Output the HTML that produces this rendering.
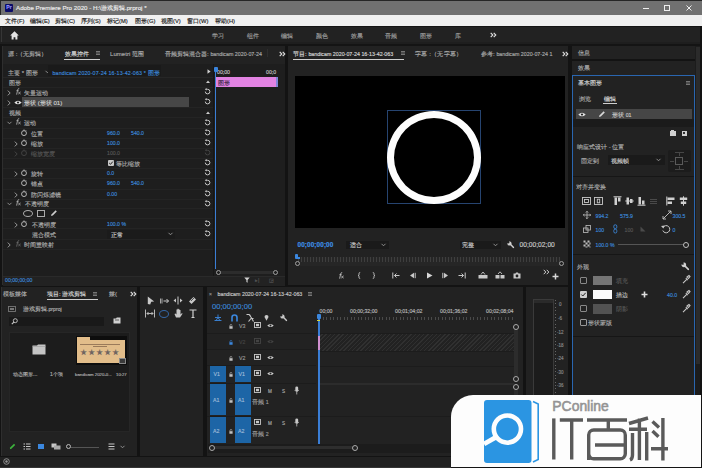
<!DOCTYPE html>
<html><head><meta charset="utf-8">
<style>
*{margin:0;padding:0;box-sizing:border-box}
html,body{width:702px;height:468px;overflow:hidden;background:#131313;font-family:"Liberation Sans",sans-serif;color:#aaaaaa}
.a{position:absolute}
svg.a{overflow:visible}
.t{position:absolute;white-space:nowrap;font-size:6.1px;line-height:7px;-webkit-text-stroke:0.15px currentColor}
.n{font-size:5.2px}
.p{position:absolute;background:#232323}
.blue{color:#3b87d8}
.dim{color:#555}
.w{color:#d6d6d6}
.hl{position:absolute;height:1px;background:#1a1a1a}
</style></head><body>
<svg width="0" height="0" style="position:absolute">
<defs>
<symbol id="sw" viewBox="0 0 6 7"><circle cx="3" cy="4.1" r="2.45" fill="none" stroke="currentColor" stroke-width="0.95"/><path d="M3 0.5V1.7" stroke="currentColor" stroke-width="1"/><path d="M4.8 1.3L5.5 2" stroke="currentColor" stroke-width="0.7"/></symbol>
<symbol id="rs" viewBox="0 0 7 7"><path d="M1.3 3.6A2.3 2.3 0 1 0 3.5 1.3H2.2" fill="none" stroke="currentColor" stroke-width="1"/><path d="M2.6 0L0.8 1.3L2.6 2.6Z" fill="currentColor"/></symbol>
<symbol id="eye" viewBox="0 0 8 5"><path d="M0.3 2.5Q4 -1.2 7.7 2.5Q4 6.2 0.3 2.5Z" fill="currentColor"/><circle cx="4" cy="2.5" r="1.1" fill="#222"/></symbol>
<symbol id="lock" viewBox="0 0 5 6"><path d="M1.2 2.6V1.8A1.3 1.3 0 0 1 3.8 1.8" fill="none" stroke="currentColor" stroke-width="0.8"/><rect x="0.5" y="2.6" width="4" height="3.2" fill="currentColor"/></symbol>
<symbol id="film" viewBox="0 0 7 6"><rect x="0.5" y="0.5" width="6" height="5" fill="none" stroke="currentColor" stroke-width="0.9"/><rect x="2" y="1.8" width="3" height="2.4" fill="currentColor"/></symbol>
<symbol id="drop" viewBox="0 0 7 7"><path d="M0.8 6.2L4 3M4.5 1.2L5.8 2.5M3.2 2L5 3.8L6.5 1.5L5.5 0.5Z" fill="currentColor" stroke="currentColor" stroke-width="0.9"/></symbol>
<symbol id="mic" viewBox="0 0 5 8"><rect x="1.2" y="0.3" width="2.6" height="4.6" rx="1.3" fill="currentColor"/><path d="M0.6 3.5Q2.5 6.6 4.4 3.5M2.5 5.4V7.6" fill="none" stroke="currentColor" stroke-width="0.7"/></symbol>
<symbol id="chr" viewBox="0 0 4 6"><path d="M0.8 0.6L3.2 3L0.8 5.4" fill="none" stroke="currentColor" stroke-width="0.9"/></symbol>
<symbol id="chd" viewBox="0 0 6 4"><path d="M0.6 0.8L3 3.2L5.4 0.8" fill="none" stroke="currentColor" stroke-width="0.9"/></symbol>
<symbol id="fx" viewBox="0 0 6 7"><path d="M4.2 0.6Q3 0.4 2.7 1.8L1.6 6.6M1.5 2.6H3.6" fill="none" stroke="currentColor" stroke-width="0.9"/><path d="M3.3 3.6L5.6 6.4M5.6 3.6L3.3 6.4" fill="none" stroke="currentColor" stroke-width="0.8"/></symbol>
<symbol id="wr" viewBox="0 0 10 10"><path d="M8.7 8.7L4.8 4.8" stroke="currentColor" stroke-width="1.9" stroke-linecap="round"/><path d="M0.8 2.6A2.7 2.7 0 1 0 2.6 0.8L3.4 2.4L2.4 3.4Z" fill="currentColor"/></symbol>
</defs></svg>

<!-- title bar -->
<div class="a" style="left:0;top:0;width:702px;height:15px;background:#717171;border-top:1px solid #262626;border-left:1px solid #262626"></div>
<div class="a" style="left:5px;top:4px;width:8px;height:7.5px;background:#0b0b66;border-radius:1px"></div>
<div class="t" style="left:6.3px;top:5px;font-size:5px;line-height:5px;color:#9a9aff;font-weight:bold">Pr</div>
<div class="t" style="left:16px;top:4px;font-size:6.2px;line-height:8px;color:#ededed">Adobe Premiere Pro 2020 - H:\游戏剪辑.prproj *</div>
<div class="a" style="left:643px;top:8px;width:6px;height:1px;background:#eee"></div>
<div class="a" style="left:664px;top:5px;width:6px;height:6px;border:1px solid #eee"></div>
<svg class="a" style="left:686px;top:5px" width="6" height="6"><path d="M0.5 0.5L5.5 5.5M5.5 0.5L0.5 5.5" stroke="#eee" stroke-width="1"/></svg>

<!-- menu bar -->
<div class="a" style="left:0;top:15px;width:702px;height:11px;background:#f0f0f0"></div>
<div class="t" style="left:5px;top:17.5px;color:#1a1a1a;font-size:5.8px">文件(F)</div>
<div class="t" style="left:30px;top:17.5px;color:#1a1a1a;font-size:5.8px">编辑(E)</div>
<div class="t" style="left:55px;top:17.5px;color:#1a1a1a;font-size:5.8px">剪辑(C)</div>
<div class="t" style="left:81px;top:17.5px;color:#1a1a1a;font-size:5.8px">序列(S)</div>
<div class="t" style="left:107px;top:17.5px;color:#1a1a1a;font-size:5.8px">标记(M)</div>
<div class="t" style="left:135px;top:17.5px;color:#1a1a1a;font-size:5.8px">图形(G)</div>
<div class="t" style="left:161px;top:17.5px;color:#1a1a1a;font-size:5.8px">视图(V)</div>
<div class="t" style="left:187px;top:17.5px;color:#1a1a1a;font-size:5.8px">窗口(W)</div>
<div class="t" style="left:215px;top:17.5px;color:#1a1a1a;font-size:5.8px">帮助(H)</div>

<!-- workspace header -->
<div class="a" style="left:0;top:26px;width:702px;height:19px;background:#222"></div>
<div class="a" style="left:0;top:26px;width:702px;height:1px;background:#151515"></div>
<div class="a" style="left:1px;top:27px;width:1px;height:15px;background:#363636"></div>
<svg class="a" style="left:10px;top:31px" width="9" height="9" viewBox="0 0 9 9"><path d="M4.5 0.3L0.2 4.4H1.6V8.6H3.6V6.2H5.4V8.6H7.4V4.4H8.8Z" fill="#e4e4e4"/></svg>
<div class="t" style="left:212px;top:31.5px;color:#9c9c9c;font-size:6.4px">学习</div>
<div class="t" style="left:247px;top:31.5px;color:#9c9c9c;font-size:6.4px">组件</div>
<div class="t" style="left:281px;top:31.5px;color:#9c9c9c;font-size:6.4px">编辑</div>
<div class="t" style="left:316px;top:31.5px;color:#9c9c9c;font-size:6.4px">颜色</div>
<div class="t" style="left:351px;top:31.5px;color:#9c9c9c;font-size:6.4px">效果</div>
<div class="t" style="left:385px;top:31.5px;color:#9c9c9c;font-size:6.4px">音频</div>
<div class="t" style="left:420px;top:31.5px;color:#9c9c9c;font-size:6.4px">图形</div>
<div class="t" style="left:455px;top:31.5px;color:#9c9c9c;font-size:6.4px">库</div>
<svg class="a" style="left:490px;top:32px" width="7" height="6"><path d="M0.7 0.8L2.8 3L0.7 5.2M3.7 0.8L5.8 3L3.7 5.2" fill="none" stroke="#e0e0e0" stroke-width="1.1"/></svg>
<div class="a" style="left:0;top:41.7px;width:702px;height:2.6px;background:#1e1e1e"></div>
<div class="a" style="left:0;top:44.3px;width:702px;height:1.9px;background:#141414"></div>

<!-- ============ EFFECT CONTROLS PANEL ============ -->
<div class="p" style="left:2px;top:46px;width:283px;height:239px;background:#222"></div>
<div class="a" style="left:2px;top:46px;width:1px;height:239px;background:#2e2e2e"></div>
<div class="t" style="left:8px;top:49.5px">源 :（无剪辑）</div>
<div class="t w" style="left:65px;top:49.5px">效果控件</div>
<svg class="a" style="left:95.5px;top:51.0px" width="4" height="4"><path d="M0 0.5H4M0 2H4M0 3.5H4" stroke="#8a8a8a" stroke-width="0.8"/></svg>
<div class="a" style="left:64px;top:59px;width:36px;height:1.2px;background:#cfcfcf"></div>
<div class="t" style="left:110px;top:49.5px">Lumetri 范围</div>
<div class="t" style="left:165px;top:49.5px">音频剪辑混合器: <span style="font-size:5.3px">bandicam 2020-07-24</span></div>
<div class="a" style="left:266.5px;top:49px;width:1px;height:8px;background:#2e2e2e"></div>
<svg class="a" style="left:279px;top:50.5px" width="7" height="6"><path d="M0.7 0.8L2.8 3L0.7 5.2M3.7 0.8L5.8 3L3.7 5.2" fill="none" stroke="#e0e0e0" stroke-width="1.1"/></svg>

<div class="a" style="left:3px;top:64px;width:282px;height:212px;background:#1e1e1e"></div>
<!-- row separators -->
<div class="hl" style="left:3px;top:77px;width:210px;background:#262626"></div>
<div class="hl" style="left:3px;top:87px;width:210px;background:#242424"></div>
<div class="hl" style="left:3px;top:107px;width:210px;background:#242424"></div>
<div class="hl" style="left:3px;top:117px;width:210px;background:#242424"></div>
<div class="hl" style="left:3px;top:128px;width:210px;background:#242424"></div>
<div class="hl" style="left:3px;top:138px;width:210px;background:#242424"></div>
<div class="hl" style="left:3px;top:148px;width:210px;background:#242424"></div>
<div class="hl" style="left:3px;top:158px;width:210px;background:#242424"></div>
<div class="hl" style="left:3px;top:168px;width:210px;background:#242424"></div>
<div class="hl" style="left:3px;top:178px;width:210px;background:#242424"></div>
<div class="hl" style="left:3px;top:189px;width:210px;background:#242424"></div>
<div class="hl" style="left:3px;top:199px;width:210px;background:#242424"></div>
<div class="hl" style="left:3px;top:208px;width:210px;background:#242424"></div>
<div class="hl" style="left:3px;top:218px;width:210px;background:#242424"></div>
<div class="hl" style="left:3px;top:228px;width:210px;background:#242424"></div>
<div class="hl" style="left:3px;top:239px;width:210px;background:#242424"></div>
<div class="hl" style="left:3px;top:249px;width:210px;background:#242424"></div>

<div class="t" style="left:8px;top:68.5px">主要 * 图形</div>
<svg class="a" style="left:45px;top:70px" width="5" height="4"><path d="M0.5 0.8L2.5 2.8L4.5 0.8" fill="none" stroke="#999" stroke-width="0.9"/></svg>
<div class="a" style="left:48px;top:65px;width:113px;height:11px;background:#1a1a1a"></div>
<div class="t blue" style="left:52.5px;top:68.5px"><span style="font-size:5.3px;letter-spacing:0.15px">bandicam 2020-07-24 16-13-42-063 *</span> 图形</div>
<svg class="a" style="left:207px;top:69px" width="4" height="5"><path d="M0.5 0.3L3.6 2.5L0.5 4.7Z" fill="#cfcfcf"/></svg>

<div class="t" style="left:9px;top:78.5px">图形</div>
<svg class="a" style="left:6.5px;top:90.0px;color:#a8a8a8" width="4" height="6"><use href="#chr"/></svg>
<svg class="a" style="left:15.0px;top:88.0px;color:#aaa" width="6" height="7"><use href="#fx"/></svg>
<div class="t" style="left:24px;top:88.5px">矢量运动</div>
<div class="a" style="left:22px;top:97px;width:167px;height:10px;background:#474747"></div>
<svg class="a" style="left:6.5px;top:100.0px;color:#a8a8a8" width="4" height="6"><use href="#chr"/></svg>
<svg class="a" style="left:14px;top:100px;color:#e0e0e0" width="8" height="5"><use href="#eye"/></svg>
<div class="t" style="left:24px;top:98.5px;color:#d0d0d0">形状 (形状 01)</div>
<div class="t" style="left:9px;top:108.5px">视频</div>
<svg class="a" style="left:7px;top:121px" width="5" height="4"><path d="M0.5 0.8L2.5 2.8L4.5 0.8" fill="none" stroke="#999" stroke-width="0.9"/></svg>
<svg class="a" style="left:15.0px;top:118.0px;color:#aaa" width="6" height="7"><use href="#fx"/></svg>
<div class="t" style="left:24px;top:118.5px">运动</div>

<svg class="a" style="left:21px;top:129px;color:#bbb" width="6" height="7"><use href="#sw"/></svg><div class="t" style="left:31px;top:129.5px">位置</div>
<div class="t blue n" style="left:107px;top:130px">960.0</div><div class="t blue n" style="left:131px;top:130px">540.0</div>
<svg class="a" style="left:13.5px;top:140.5px;color:#a8a8a8" width="4" height="6"><use href="#chr"/></svg><svg class="a" style="left:21px;top:139px;color:#bbb" width="6" height="7"><use href="#sw"/></svg><div class="t" style="left:31px;top:139.5px">缩放</div>
<div class="t blue n" style="left:107px;top:140px">100.0</div>
<svg class="a" style="left:13.5px;top:150.5px;color:#4a4a4a" width="4" height="6"><use href="#chr"/></svg><svg class="a" style="left:21px;top:149px;color:#444" width="6" height="7"><use href="#sw"/></svg><div class="t dim" style="left:31px;top:149.5px">缩放宽度</div>
<div class="t dim n" style="left:107px;top:150px">100.0</div>
<div class="a" style="left:108px;top:160px;width:6px;height:6px;background:#c8c8c8;border-radius:1px"></div>
<svg class="a" style="left:108px;top:160px" width="6" height="6"><path d="M1.2 3L2.5 4.3L4.8 1.6" fill="none" stroke="#222" stroke-width="1"/></svg>
<div class="t" style="left:116px;top:159.5px">等比缩放</div>
<svg class="a" style="left:13.5px;top:170.5px;color:#a8a8a8" width="4" height="6"><use href="#chr"/></svg><svg class="a" style="left:21px;top:169px;color:#bbb" width="6" height="7"><use href="#sw"/></svg><div class="t" style="left:31px;top:169.5px">旋转</div>
<div class="t blue n" style="left:107px;top:170px">0.0</div>
<svg class="a" style="left:21px;top:179px;color:#bbb" width="6" height="7"><use href="#sw"/></svg><div class="t" style="left:31px;top:179.5px">锚点</div>
<div class="t blue n" style="left:107px;top:180px">960.0</div><div class="t blue n" style="left:131px;top:180px">540.0</div>
<svg class="a" style="left:13.5px;top:191.5px;color:#a8a8a8" width="4" height="6"><use href="#chr"/></svg><svg class="a" style="left:21px;top:190px;color:#bbb" width="6" height="7"><use href="#sw"/></svg><div class="t" style="left:31px;top:190.5px">防闪烁滤镜</div>
<div class="t blue n" style="left:107px;top:191px">0.00</div>
<svg class="a" style="left:7px;top:202px" width="5" height="4"><path d="M0.5 0.8L2.5 2.8L4.5 0.8" fill="none" stroke="#999" stroke-width="0.9"/></svg>
<svg class="a" style="left:15.0px;top:199.0px;color:#aaa" width="6" height="7"><use href="#fx"/></svg>
<div class="t" style="left:25px;top:199.5px">不透明度</div>
<div class="a" style="left:23px;top:210px;width:10px;height:7px;border:1px solid #aaa;border-radius:50%"></div>
<div class="a" style="left:37px;top:210px;width:8px;height:7px;border:1px solid #aaa"></div>
<svg class="a" style="left:50px;top:209px" width="8" height="8"><path d="M1 7L1.6 5.2L5.6 1.2L6.8 2.4L2.8 6.4Z" fill="#ccc"/></svg>
<svg class="a" style="left:13.5px;top:221.5px;color:#a8a8a8" width="4" height="6"><use href="#chr"/></svg><svg class="a" style="left:21px;top:220px;color:#bbb" width="6" height="7"><use href="#sw"/></svg><div class="t" style="left:32px;top:220.5px">不透明度</div>
<div class="t blue n" style="left:107px;top:221px">100.0 %</div>
<div class="t" style="left:32px;top:230.5px">混合模式</div>
<div class="a" style="left:107px;top:229.5px;width:68px;height:9px;background:#1b1b1b"></div>
<div class="t" style="left:111px;top:230.5px;color:#c8c8c8">正常</div>
<svg class="a" style="left:168px;top:232px" width="5" height="4"><path d="M0.5 0.8L2.5 2.8L4.5 0.8" fill="none" stroke="#999" stroke-width="0.9"/></svg>
<svg class="a" style="left:6.5px;top:241.5px;color:#a8a8a8" width="4" height="6"><use href="#chr"/></svg>
<svg class="a" style="left:15.0px;top:240.0px;color:#666" width="6" height="7"><use href="#fx"/></svg>
<div class="t" style="left:24px;top:240.5px">时间重映射</div>

<!-- reset icons column -->
<svg class="a" style="left:206px;top:80px" width="4" height="3"><path d="M0 3L2 0.5L4 3Z" fill="#ccc"/></svg>
<svg class="a" style="left:204px;top:88px;color:#c8c8c8" width="7" height="7"><use href="#rs"/></svg>
<svg class="a" style="left:204px;top:98px;color:#c8c8c8" width="7" height="7"><use href="#rs"/></svg>
<svg class="a" style="left:206px;top:111px" width="4" height="3"><path d="M0 3L2 0.5L4 3Z" fill="#ccc"/></svg>
<svg class="a" style="left:204px;top:119px;color:#c8c8c8" width="7" height="7"><use href="#rs"/></svg>
<svg class="a" style="left:204px;top:129px;color:#c8c8c8" width="7" height="7"><use href="#rs"/></svg>
<svg class="a" style="left:204px;top:139px;color:#c8c8c8" width="7" height="7"><use href="#rs"/></svg>
<svg class="a" style="left:204px;top:149px;color:#444" width="7" height="7"><use href="#rs"/></svg>
<svg class="a" style="left:204px;top:159px;color:#c8c8c8" width="7" height="7"><use href="#rs"/></svg>
<svg class="a" style="left:204px;top:169px;color:#c8c8c8" width="7" height="7"><use href="#rs"/></svg>
<svg class="a" style="left:204px;top:179px;color:#c8c8c8" width="7" height="7"><use href="#rs"/></svg>
<svg class="a" style="left:204px;top:190px;color:#c8c8c8" width="7" height="7"><use href="#rs"/></svg>
<svg class="a" style="left:204px;top:200px;color:#c8c8c8" width="7" height="7"><use href="#rs"/></svg>
<svg class="a" style="left:204px;top:220px;color:#c8c8c8" width="7" height="7"><use href="#rs"/></svg>
<svg class="a" style="left:204px;top:230px;color:#c8c8c8" width="7" height="7"><use href="#rs"/></svg>

<!-- effect timeline -->
<div class="a" style="left:213px;top:64px;width:1px;height:212px;background:#171717"></div>
<div class="t n" style="left:217px;top:68.5px;color:#c4c4c4">00;00</div>
<div class="t n" style="left:266px;top:68.5px;color:#c4c4c4">00;0</div>
<div class="a" style="left:215px;top:77px;width:63px;height:10px;background:#e283e2"></div>
<div class="a" style="left:276px;top:77px;width:2px;height:10px;background:#7f86d8"></div>
<div class="t" style="left:218px;top:78.5px;color:#402a48">图形</div>
<div class="a" style="left:215px;top:68px;width:1.3px;height:201px;background:#3a7ed6"></div>
<div class="a" style="left:213.5px;top:67px;width:4px;height:5px;background:#3a84dd;border-radius:1px"></div>
<div class="a" style="left:218px;top:271px;width:57px;height:3px;background:#2c2c2c"></div>
<div class="a" style="left:215.5px;top:269.5px;width:5px;height:5px;border:1px solid #a0a0a0;border-radius:50%;background:#1e1e1e"></div>
<div class="a" style="left:272.5px;top:269.5px;width:5px;height:5px;border:1px solid #a0a0a0;border-radius:50%;background:#1e1e1e"></div>

<div class="a" style="left:3px;top:275.5px;width:282px;height:10px;background:#222;border-top:1px solid #2a2a2a"></div>
<div class="t blue n" style="left:5px;top:277px">00;00;00;00</div>
<svg class="a" style="left:244px;top:277px" width="6" height="6"><path d="M0.3 0.5H5.7L3.6 3V5.8L2.4 5V3Z" fill="#d0d0d0"/></svg>
<div class="t dim" style="left:255px;top:276.5px;font-size:5px">▸|</div>
<div class="t dim" style="left:269px;top:276.5px;font-size:5px">◲</div>

<!-- ============ PROGRAM MONITOR ============ -->
<div class="p" style="left:288px;top:46px;width:280px;height:239px;background:#222"></div>
<div class="t w" style="left:293px;top:49.5px">节目: <span style="font-size:5.3px">bandicam 2020-07-24 16-13-42-063</span></div>
<svg class="a" style="left:400.5px;top:51.0px" width="4" height="4"><path d="M0 0.5H4M0 2H4M0 3.5H4" stroke="#8a8a8a" stroke-width="0.8"/></svg>
<div class="a" style="left:293px;top:59px;width:111px;height:1.2px;background:#cfcfcf"></div>
<div class="t" style="left:415px;top:49.5px;letter-spacing:0.2px">字幕 :（无字幕）</div>
<div class="t" style="left:481px;top:49.5px">参考: <span style="font-size:5.3px">bandicam 2020-07-24 1</span></div>
<svg class="a" style="left:562px;top:50.5px" width="7" height="6"><path d="M0.7 0.8L2.8 3L0.7 5.2M3.7 0.8L5.8 3L3.7 5.2" fill="none" stroke="#e0e0e0" stroke-width="1.1"/></svg>
<div class="a" style="left:294.5px;top:76px;width:270px;height:152px;background:#000"></div>
<div class="a" style="left:386.5px;top:110px;width:94.5px;height:94px;border:1px solid #264470"></div>
<div class="a" style="left:387px;top:110.5px;width:94px;height:93px;border:7.3px solid #fdfdfd;border-radius:50%"></div>
<div class="t blue" style="left:297.5px;top:240.5px;font-size:6.4px;line-height:7px;font-weight:bold;letter-spacing:0.1px;color:#3f8fe6">00;00;00;00</div>
<div class="a" style="left:346px;top:240.5px;width:43px;height:8px;background:#1a1a1a"></div>
<div class="t" style="left:350px;top:241px;color:#c8c8c8">适合</div>
<svg class="a" style="left:381px;top:243px" width="5" height="4"><path d="M0.5 0.8L2.5 2.8L4.5 0.8" fill="none" stroke="#999" stroke-width="0.9"/></svg>
<div class="a" style="left:460px;top:240.5px;width:41px;height:8px;background:#1a1a1a"></div>
<div class="t" style="left:462px;top:241px;color:#c8c8c8">完整</div>
<svg class="a" style="left:493px;top:243px" width="5" height="4"><path d="M0.5 0.8L2.5 2.8L4.5 0.8" fill="none" stroke="#999" stroke-width="0.9"/></svg>
<svg class="a" style="left:507px;top:240.5px;color:#d0d0d0" width="7.5" height="7.5"><use href="#wr"/></svg>
<div class="t n" style="left:519.5px;top:240.5px;color:#c8c8c8;font-size:6.7px">00;00;02;00</div>
<div class="a" style="left:298px;top:257px;width:262px;height:9px;background:#262626"></div>
<div class="a" style="left:298px;top:256.5px;width:262px;height:5px;background:repeating-linear-gradient(90deg,#3e3e3e 0 1px,transparent 1px 3px)"></div>
<div class="a" style="left:295px;top:253.5px;width:3px;height:5px;background:#3b87de;border-radius:1px"></div>
<div class="a" style="left:296px;top:257px;width:4px;height:2px;background:#3b87de"></div>
<div class="a" style="left:294.5px;top:260.5px;width:5px;height:5px;border:1px solid #a0a0a0;border-radius:50%;background:#222"></div>
<div class="a" style="left:558.5px;top:260.5px;width:5px;height:5px;border:1px solid #a0a0a0;border-radius:50%;background:#222"></div>
<svg class="a" style="left:337.5px;top:272px;color:#c0c0c0" width="6" height="7"><use href="#fx"/></svg>
<svg class="a" style="left:356.5px;top:272px" width="4" height="7"><path d="M3.2 0.5Q2 0.5 2 1.6V2.6Q2 3.5 1 3.5Q2 3.5 2 4.4V5.4Q2 6.5 3.2 6.5" fill="none" stroke="#c8c8c8" stroke-width="0.9"/></svg>
<svg class="a" style="left:371.5px;top:272px" width="4" height="7"><path d="M0.8 0.5Q2 0.5 2 1.6V2.6Q2 3.5 3 3.5Q2 3.5 2 4.4V5.4Q2 6.5 0.8 6.5" fill="none" stroke="#c8c8c8" stroke-width="0.9"/></svg>
<svg class="a" style="left:392px;top:272px" width="8" height="7"><path d="M0.8 0.5V6.5M7.5 3.5H2.5M4.5 1.5L2.5 3.5L4.5 5.5" fill="none" stroke="#c8c8c8" stroke-width="1"/></svg>
<svg class="a" style="left:409px;top:272px" width="7" height="7"><path d="M5 0.8L1 3.5L5 6.2Z" fill="#c8c8c8"/><path d="M6.2 0.8V6.2" stroke="#c8c8c8" stroke-width="1"/></svg>
<svg class="a" style="left:426px;top:272px" width="7" height="7"><path d="M1 0.5L6.5 3.5L1 6.5Z" fill="#d8d8d8"/></svg>
<svg class="a" style="left:442px;top:272px" width="7" height="7"><path d="M2 0.8L6 3.5L2 6.2Z" fill="#c8c8c8"/><path d="M0.8 0.8V6.2" stroke="#c8c8c8" stroke-width="1"/></svg>
<svg class="a" style="left:458px;top:272px" width="8" height="7"><path d="M7.2 0.5V6.5M0.5 3.5H5.5M3.5 1.5L5.5 3.5L3.5 5.5" fill="none" stroke="#c8c8c8" stroke-width="1"/></svg>
<svg class="a" style="left:478px;top:271px" width="10" height="8"><path d="M0.5 4H9.5V7.5H0.5Z" fill="#c8c8c8"/><path d="M3 3.5L5 1L7 3.5" fill="none" stroke="#c8c8c8" stroke-width="0.9"/></svg>
<svg class="a" style="left:495px;top:271px" width="10" height="8"><path d="M0.5 4H4.5V7.5H0.5Z M5.5 4H9.5V7.5H5.5Z" fill="#c8c8c8"/><path d="M3 3L5 0.8L7 3" fill="none" stroke="#c8c8c8" stroke-width="0.9"/></svg>
<svg class="a" style="left:513px;top:272px" width="8" height="7"><path d="M0.5 1.5H2.5L3 0.5H5L5.5 1.5H7.5V6.5H0.5Z" fill="#c8c8c8"/><circle cx="4" cy="4" r="1.4" fill="#222"/></svg>
<svg class="a" style="left:543px;top:269px" width="7" height="6"><path d="M0.7 0.8L2.8 3L0.7 5.2M3.7 0.8L5.8 3L3.7 5.2" fill="none" stroke="#d0d0d0" stroke-width="1"/></svg>
<svg class="a" style="left:552px;top:273px" width="7" height="7"><path d="M3.5 0.5V6.5M0.5 3.5H6.5" stroke="#d8d8d8" stroke-width="1.5"/></svg>

<!-- ============ RIGHT PANEL ============ -->
<div class="p" style="left:572px;top:46px;width:123px;height:13px;background:#222"></div>
<div class="t" style="left:578px;top:49px">信息</div>
<div class="p" style="left:572px;top:60.5px;width:123px;height:14px;background:#222"></div>
<div class="t" style="left:578px;top:63.5px">效果</div>
<div class="p" style="left:572px;top:75px;width:122.5px;height:393px;background:#222;border:1px solid #2a66b0"></div>
<div class="t w" style="left:578px;top:78.8px">基本图形</div>
<svg class="a" style="left:685.5px;top:81.0px" width="4" height="4"><path d="M0 0.5H4M0 2H4M0 3.5H4" stroke="#8a8a8a" stroke-width="0.8"/></svg>
<div class="t" style="left:579px;top:95px">浏览</div>
<div class="t w" style="left:603.5px;top:95px">编辑</div>
<div class="a" style="left:603px;top:103px;width:14px;height:1.2px;background:#cfcfcf"></div>
<div class="a" style="left:576px;top:109px;width:116px;height:10px;background:#464646"></div>
<svg class="a" style="left:578px;top:112px;color:#e0e0e0" width="8" height="5"><use href="#eye"/></svg>
<svg class="a" style="left:598px;top:110px" width="8" height="8"><path d="M1 7L1.6 5.2L5.6 1.2L6.8 2.4L2.8 6.4Z" fill="#d8d8d8"/></svg>
<div class="t" style="left:612px;top:110.5px;color:#c8c8c8">形状 <span class="n">01</span></div>
<div class="a" style="left:573px;top:119px;width:121px;height:8px;background:#1b1b1b"></div>
<div class="a" style="left:670px;top:131px;width:6px;height:5px;background:#d0d0d0"></div>
<div class="a" style="left:671px;top:130px;width:3px;height:1px;background:#d0d0d0"></div>
<div class="a" style="left:682px;top:130.5px;width:5px;height:5px;background:#d0d0d0"></div>
<div class="a" style="left:683px;top:131.5px;width:2px;height:2px;background:#333"></div>
<div class="t" style="left:577px;top:142.5px">响应式设计 - 位置</div>
<div class="t" style="left:581px;top:156.5px">固定到</div>
<div class="a" style="left:608px;top:155px;width:57px;height:10px;background:#1a1a1a"></div>
<div class="t" style="left:611px;top:156.5px;color:#c8c8c8">视频帧</div>
<svg class="a" style="left:656px;top:158px" width="5" height="4"><path d="M0.5 0.8L2.5 2.8L4.5 0.8" fill="none" stroke="#999" stroke-width="0.9"/></svg>
<div class="a" style="left:668px;top:150px;width:23px;height:22px;background:#1c1c1c;border-radius:2px"></div>
<div class="a" style="left:675px;top:157px;width:8px;height:8px;border:1px solid #5a5a5a"></div>
<div class="a" style="left:679px;top:152px;width:1px;height:4px;background:#464646"></div>
<div class="a" style="left:679px;top:166px;width:1px;height:4px;background:#464646"></div>
<div class="a" style="left:670px;top:161px;width:4px;height:1px;background:#464646"></div>
<div class="a" style="left:684px;top:161px;width:4px;height:1px;background:#464646"></div>
<div class="a" style="left:675px;top:152px;width:9px;height:1px;background:#464646"></div>
<div class="a" style="left:675px;top:169px;width:9px;height:1px;background:#464646"></div>
<div class="a" style="left:573px;top:176px;width:121px;height:1px;background:#161616"></div>
<div class="t" style="left:576px;top:182.5px">对齐并变换</div>
<!-- align icons -->
<svg class="a" style="left:582px;top:197px" width="10" height="9"><rect x="0.5" y="0.5" width="8" height="7" fill="none" stroke="#c8c8c8" stroke-width="0.9"/><rect x="2.5" y="2.5" width="4" height="3" fill="none" stroke="#c8c8c8" stroke-width="0.9"/></svg>
<svg class="a" style="left:594px;top:197px" width="10" height="9"><rect x="0.5" y="0.5" width="8" height="7" fill="none" stroke="#c8c8c8" stroke-width="0.9"/><rect x="3.3" y="2.2" width="2.4" height="3.6" fill="none" stroke="#c8c8c8" stroke-width="0.9"/></svg>
<svg class="a" style="left:613px;top:196px" width="9" height="10"><path d="M0.5 0.8H8.5" stroke="#d0d0d0" stroke-width="1"/><rect x="1.5" y="1.5" width="2.5" height="7.5" fill="#d0d0d0"/><rect x="5" y="1.5" width="2.5" height="4" fill="#d0d0d0"/></svg>
<svg class="a" style="left:624.5px;top:196px" width="9" height="10"><path d="M0.3 5H8.7" stroke="#d0d0d0" stroke-width="1"/><rect x="1.5" y="1.5" width="2.5" height="7" fill="#d0d0d0"/><rect x="5" y="3" width="2.5" height="4" fill="#d0d0d0"/></svg>
<svg class="a" style="left:636.5px;top:196px" width="9" height="10"><path d="M0.5 9.2H8.5" stroke="#d0d0d0" stroke-width="1"/><rect x="1.5" y="1" width="2.5" height="7.5" fill="#d0d0d0"/><rect x="5" y="4.5" width="2.5" height="4" fill="#d0d0d0"/></svg>
<svg class="a" style="left:650px;top:198px" width="7" height="7"><path d="M0 1.5H7M0 3.5H7M0 5.5H7" stroke="#4a4a4a" stroke-width="1"/></svg>
<svg class="a" style="left:666px;top:196px" width="9" height="10"><path d="M0.8 0.5V9.5" stroke="#d0d0d0" stroke-width="1"/><rect x="1.5" y="1.5" width="7" height="2.5" fill="#d0d0d0"/><rect x="1.5" y="5.5" width="4.5" height="2.5" fill="#d0d0d0"/></svg>
<svg class="a" style="left:679px;top:196px" width="9" height="10"><path d="M4.5 0.3V9.7" stroke="#d0d0d0" stroke-width="1"/><rect x="0.8" y="1.5" width="7.4" height="2.5" fill="#d0d0d0"/><rect x="1.8" y="5.5" width="5.4" height="2.5" fill="#d0d0d0"/></svg>
<svg class="a" style="left:583px;top:211px" width="8" height="8"><path d="M4 0.3V7.7M0.3 4H7.7M2.8 1.5L4 0.3L5.2 1.5M2.8 6.5L4 7.7L5.2 6.5M1.5 2.8L0.3 4L1.5 5.2M6.5 2.8L7.7 4L6.5 5.2" fill="none" stroke="#c0c0c0" stroke-width="0.8"/></svg>
<div class="t blue n" style="left:595.5px;top:212.5px">994.2</div>
<div class="t blue n" style="left:620px;top:212.5px">575.9</div>
<svg class="a" style="left:662px;top:210px" width="10" height="10"><path d="M1 9L9 1M6 1H9V4M1 6V9H4" fill="none" stroke="#c8c8c8" stroke-width="0.9"/></svg>
<div class="t blue n" style="left:672.5px;top:212.5px">300.5</div>
<svg class="a" style="left:583px;top:225px" width="8" height="8"><rect x="0.5" y="3" width="4.5" height="4.5" fill="none" stroke="#c0c0c0" stroke-width="0.8"/><rect x="3" y="0.5" width="4.5" height="4.5" fill="none" stroke="#c0c0c0" stroke-width="0.8"/></svg>
<div class="t blue n" style="left:595.5px;top:226.5px">100</div>
<svg class="a" style="left:613px;top:224px" width="5" height="10"><rect x="0.8" y="0.8" width="3" height="3.8" rx="1.4" fill="none" stroke="#3b87d8" stroke-width="0.9"/><rect x="0.8" y="5.2" width="3" height="3.8" rx="1.4" fill="none" stroke="#3b87d8" stroke-width="0.9"/></svg>
<div class="t dim n" style="left:624.5px;top:226.5px">100</div>
<svg class="a" style="left:640px;top:226px" width="6" height="6"><path d="M0.5 0.5L5.5 5.5L0.5 5.5Z" fill="#4a4a4a"/></svg>
<svg class="a" style="left:661px;top:224px" width="10" height="9"><path d="M2 3.5A3.6 3.6 0 1 1 1.8 6.5" fill="none" stroke="#c8c8c8" stroke-width="1"/><path d="M0 2L2.5 4.5L3.5 1.5Z" fill="#c8c8c8"/></svg>
<div class="t blue n" style="left:672.5px;top:226.5px">0</div>
<svg class="a" style="left:583px;top:240px" width="8" height="8"><path d="M0.5 0.5h2v2h-2zM4.5 0.5h2v2h-2zM2.5 2.5h2v2h-2zM6.5 2.5h1v2h-1zM0.5 4.5h2v2h-2zM4.5 4.5h2v2h-2zM2.5 6.5h2v1h-2zM6.5 6.5h1v1h-1z" fill="#bbb"/></svg>
<div class="t blue n" style="left:595.5px;top:241.5px">100.0 %</div>
<div class="a" style="left:618px;top:244px;width:65px;height:1px;background:#555"></div>
<div class="a" style="left:683px;top:241.5px;width:6px;height:6px;border:1px solid #c0c0c0;border-radius:50%"></div>
<div class="a" style="left:573px;top:254px;width:121px;height:1px;background:#161616"></div>
<div class="t" style="left:576.5px;top:262.5px">外观</div>
<svg class="a" style="left:681px;top:262px;color:#d0d0d0" width="8.5" height="8.5"><use href="#wr"/></svg>
<div class="a" style="left:579.5px;top:277px;width:7px;height:7px;border:1px solid #888;border-radius:1px"></div>
<div class="a" style="left:592.5px;top:275.5px;width:19.5px;height:9.5px;background:#757575"></div>
<div class="t dim" style="left:616px;top:276.5px">填充</div>
<svg class="a" style="left:682px;top:275px;color:#c8c8c8" width="8" height="9"><path d="M1 8.2L4.5 4.7M3.8 3.2L5.8 5.2M5 2L7 0.5L8 1.5L6.5 3.5Z" fill="none" stroke="#c8c8c8" stroke-width="1.1"/></svg>
<div class="a" style="left:579.5px;top:291px;width:7px;height:7px;background:#cfcfcf;border-radius:1px"></div>
<svg class="a" style="left:579.5px;top:291px" width="7" height="7"><path d="M1.3 3.5L2.8 5L5.7 1.8" fill="none" stroke="#222" stroke-width="1"/></svg>
<div class="a" style="left:592.5px;top:290px;width:19.5px;height:9px;background:#fbfbfb"></div>
<div class="t" style="left:615.5px;top:291px;color:#b8b8b8">描边</div>
<svg class="a" style="left:640.5px;top:291px" width="7" height="7"><path d="M3.5 0.5V6.5M0.5 3.5H6.5" stroke="#e0e0e0" stroke-width="1.6"/></svg>
<div class="t blue n" style="left:667px;top:291.5px">40.0</div>
<svg class="a" style="left:682px;top:290px" width="8" height="9"><path d="M1 8.2L4.5 4.7M3.8 3.2L5.8 5.2M5 2L7 0.5L8 1.5L6.5 3.5Z" fill="none" stroke="#c8c8c8" stroke-width="1.1"/></svg>
<div class="a" style="left:579.5px;top:305px;width:7px;height:7px;border:1px solid #888;border-radius:1px"></div>
<div class="a" style="left:592.5px;top:304px;width:19.5px;height:9.5px;background:#525252"></div>
<div class="t dim" style="left:616px;top:305px">阴影</div>
<svg class="a" style="left:682px;top:304px" width="8" height="9"><path d="M1 8.2L4.5 4.7M3.8 3.2L5.8 5.2M5 2L7 0.5L8 1.5L6.5 3.5Z" fill="none" stroke="#c8c8c8" stroke-width="1.1"/></svg>
<div class="a" style="left:579.5px;top:319px;width:7px;height:7px;border:1px solid #999;border-radius:1px"></div>
<div class="t" style="left:588px;top:319px">形状蒙版</div>
<div class="a" style="left:573px;top:336px;width:121px;height:1px;background:#161616"></div>
<div class="a" style="left:695px;top:46px;width:7px;height:422px;background:#1c1c1c"></div>
<div class="a" style="left:695.5px;top:47px;width:4.5px;height:317px;background:#2b2b2b"></div>
<div class="a" style="left:700px;top:26px;width:2px;height:442px;background:#121212"></div>

<!-- ============ PROJECT PANEL ============ -->
<div class="p" style="left:1px;top:287px;width:136px;height:168.5px;background:#222"></div>
<div class="a" style="left:1px;top:287px;width:1px;height:168.5px;background:#2e2e2e"></div>
<div class="t" style="left:3px;top:290px">模板媒体</div>
<div class="t w" style="left:47px;top:290px">项目: 游戏剪辑</div>
<svg class="a" style="left:92.5px;top:291.5px" width="4" height="4"><path d="M0 0.5H4M0 2H4M0 3.5H4" stroke="#8a8a8a" stroke-width="0.8"/></svg>
<div class="a" style="left:47px;top:299px;width:51px;height:1.2px;background:#cfcfcf"></div>
<div class="t" style="left:109px;top:290px">媒(</div>
<svg class="a" style="left:130px;top:291px" width="7" height="6"><path d="M0.7 0.8L2.8 3L0.7 5.2M3.7 0.8L5.8 3L3.7 5.2" fill="none" stroke="#e0e0e0" stroke-width="1.1"/></svg>
<svg class="a" style="left:8px;top:306px" width="8" height="6"><rect x="0.5" y="0.5" width="7" height="5" fill="none" stroke="#777" stroke-width="0.9"/><rect x="2" y="2" width="4" height="2" fill="#777"/></svg>
<div class="t" style="left:23px;top:305px;color:#b0b0b0">游戏剪辑<span class="n">.prproj</span></div>
<div class="a" style="left:9px;top:317px;width:95px;height:9px;background:#191919"></div>
<svg class="a" style="left:11px;top:318px" width="7" height="7"><circle cx="4.3" cy="2.7" r="2" fill="none" stroke="#c8c8c8" stroke-width="0.9"/><path d="M0.8 6.2L2.9 4.1" stroke="#c8c8c8" stroke-width="1.2"/></svg>
<svg class="a" style="left:113px;top:317px" width="8" height="7"><path d="M0.5 1.5H3L3.8 0.5H7.5V6.5H0.5Z" fill="#d0d0d0"/><path d="M2 3H6" stroke="#444" stroke-width="0.8"/></svg>
<div class="a" style="left:9px;top:332px;width:121px;height:100px;background:#1c1c1c;border:1px solid #262626"></div>
<svg class="a" style="left:32px;top:344px" width="14" height="11"><path d="M0.5 1.5H5L6 0.5H13.5V10.5H0.5Z" fill="#c4c4c4"/><path d="M0.5 2.5H13.5" stroke="#999" stroke-width="0.6"/></svg>
<div class="t n" style="left:13px;top:370.5px">动态图形...</div>
<div class="t n" style="left:50px;top:370.5px">1个项</div>
<div class="a" style="left:75.5px;top:336px;width:51.5px;height:28.5px;background:#0d0d0d"></div>
<div class="a" style="left:76.5px;top:340px;width:48px;height:23px;background:#e2bd8a"></div>
<div class="a" style="left:76.5px;top:337px;width:13px;height:4px;background:#e2bd8a"></div>
<div class="a" style="left:80px;top:343.5px;width:40px;height:1px;background:#9a7a5a"></div>
<div class="a" style="left:93px;top:346px;width:14px;height:1px;background:#9a7a5a"></div>
<div class="t" style="left:80px;top:348.5px;font-size:7.5px;line-height:8px;color:#6e6460;letter-spacing:0.9px">★★★★★</div>
<div class="a" style="left:119px;top:358px;width:7px;height:6px;background:#3a3a3a;border:0.5px solid #888"></div>
<div class="t n" style="left:75px;top:370.5px;font-size:4.3px">bandicam 2020-0...</div>
<div class="t n" style="left:116px;top:370.5px;font-size:4.3px">10:27</div>
<svg class="a" style="left:9px;top:443px" width="7" height="7"><path d="M0.8 6.2L1.2 4.6L5 0.8L6.2 2L2.4 5.8Z" fill="#3db33d"/></svg>
<svg class="a" style="left:23px;top:443px" width="8" height="7"><path d="M0.5 1H2M0.5 3.5H2M0.5 6H2M3 1H7.5M3 3.5H7.5M3 6H7.5" stroke="#c8c8c8" stroke-width="1"/></svg>
<div class="a" style="left:38px;top:444px;width:6px;height:5px;background:#3b87de"></div>
<svg class="a" style="left:51px;top:443px" width="10" height="7"><rect x="0.5" y="0.5" width="5" height="4" fill="#c8c8c8"/><rect x="3" y="2.5" width="6.5" height="4" fill="#aaa"/></svg>
<div class="a" style="left:66px;top:444px;width:5px;height:5px;border:1px solid #bbb;border-radius:50%"></div>
<div class="a" style="left:71px;top:446.5px;width:28px;height:1px;background:#555"></div>
<svg class="a" style="left:108px;top:443px" width="7" height="7"><path d="M0.5 1H6.5M0.5 3.5H6.5M0.5 6H6.5" stroke="#c8c8c8" stroke-width="1"/></svg>
<svg class="a" style="left:120px;top:445px" width="5" height="4"><path d="M0.5 0.8L2.5 2.8L4.5 0.8" fill="none" stroke="#999" stroke-width="0.9"/></svg>
<div class="a" style="left:0;top:455.5px;width:702px;height:1.5px;background:#131313"></div>
<div class="a" style="left:0;top:457px;width:702px;height:9.5px;background:#212121"></div>
<div class="a" style="left:0;top:466.5px;width:702px;height:1.5px;background:#353535"></div>
<svg class="a" style="left:3px;top:458px" width="7" height="7"><circle cx="3.5" cy="3.5" r="2.8" fill="none" stroke="#999" stroke-width="0.9"/><circle cx="3.5" cy="3.5" r="1.2" fill="#999"/></svg>

<!-- ============ TOOLS ============ -->
<div class="p" style="left:140px;top:287px;width:63px;height:168.5px;background:#222"></div>
<svg class="a" style="left:147px;top:296px" width="8" height="9"><path d="M0.8 0.6L7.2 5.6L4.2 5.8L3.2 8.4L0.8 8Z" fill="#c8c8c8"/></svg>
<svg class="a" style="left:160px;top:297px" width="10" height="8"><path d="M0.5 1.5V6.5M2 1.5V6.5" stroke="#c8c8c8" stroke-width="0.8"/><path d="M3.5 4H8.5M6.5 2L8.5 4L6.5 6" fill="none" stroke="#c8c8c8" stroke-width="1"/></svg>
<svg class="a" style="left:173px;top:296px" width="10" height="9"><path d="M5 0.5V8.5" stroke="#c8c8c8" stroke-width="1"/><path d="M0.5 4.5L3 2.5V6.5Z M9.5 4.5L7 2.5V6.5Z" fill="#c8c8c8"/></svg>
<svg class="a" style="left:188px;top:296px" width="9" height="9"><path d="M1 5.5L5.5 1L8 3.5L3.5 8Z" fill="#c8c8c8"/><path d="M3 5L6 2" stroke="#333" stroke-width="0.8"/></svg>
<svg class="a" style="left:145px;top:309px" width="10" height="9"><path d="M0.5 0.5V8.5M9.5 0.5V8.5" stroke="#c8c8c8" stroke-width="0.9"/><path d="M2 4.5H8M3.5 3L2 4.5L3.5 6M6.5 3L8 4.5L6.5 6" fill="none" stroke="#c8c8c8" stroke-width="0.9"/></svg>
<div class="a" style="left:159px;top:310px;width:10px;height:8px;border:1.2px solid #3568a8;border-radius:50%"></div>
<svg class="a" style="left:174px;top:308px" width="9" height="10"><path d="M2 9.5L0.5 6L1.5 5.5L2.5 6.5V1.5H3.5V5V0.8H4.5V5V1.2H5.5V5V2H6.5V6.5L8 5L8.5 5.8L6 9.5Z" fill="#c8c8c8"/></svg>
<svg class="a" style="left:189px;top:309px" width="8" height="9"><path d="M0.5 1H7.5M4 1V8.5M2.5 8.5H5.5" stroke="#d0d0d0" stroke-width="1.2"/></svg>

<!-- ============ TIMELINE ============ -->
<div class="p" style="left:207px;top:287px;width:316px;height:168.5px;background:#222"></div>
<div class="t" style="left:209px;top:290.5px;font-size:5px;color:#888">×</div>
<div class="t n" style="left:217.5px;top:290.5px;color:#c8c8c8;font-size:5.3px">bandicam 2020-07-24 16-13-42-063</div>
<svg class="a" style="left:307.5px;top:292.0px" width="4" height="4"><path d="M0 0.5H4M0 2H4M0 3.5H4" stroke="#8a8a8a" stroke-width="0.8"/></svg>
<div class="t blue" style="left:212px;top:303px;font-size:7.6px;line-height:8px">00;00;00;00</div>
<svg class="a" style="left:214px;top:314px" width="8" height="7"><path d="M4 0.5V3.5M1 3.5H7M2 6.5L4 3.5L6 6.5M0.5 6.5H7.5" fill="none" stroke="#3b87de" stroke-width="0.9"/></svg>
<svg class="a" style="left:230.5px;top:313.5px" width="7" height="8"><path d="M1 7.5V3.5A2.5 2.5 0 0 1 6 3.5V7.5" fill="none" stroke="#3b87de" stroke-width="1.6"/></svg>
<svg class="a" style="left:246px;top:313.5px" width="8" height="8"><path d="M0.5 0.5H3L5 3M2.5 7.5L5 4.5H7.5M3.5 0.5L7.5 7.5" fill="none" stroke="#c8c8c8" stroke-width="1.1"/></svg>
<svg class="a" style="left:264px;top:313.5px" width="5" height="7"><path d="M2.5 6.8L0.5 3A2 2 0 1 1 4.5 3Z" fill="#c8c8c8"/></svg>
<svg class="a" style="left:279.5px;top:313.5px;color:#c8c8c8" width="7.5" height="7.5"><use href="#wr"/></svg>
<!-- track header rows -->
<div class="hl" style="left:207px;top:333px;width:109px;background:#1c1c1c"></div>
<div class="hl" style="left:207px;top:349px;width:109px;background:#1c1c1c"></div>
<div class="hl" style="left:207px;top:365px;width:109px;background:#1c1c1c"></div>
<div class="hl" style="left:207px;top:383px;width:109px;background:#1c1c1c"></div>
<div class="hl" style="left:207px;top:416px;width:109px;background:#1c1c1c"></div>
<svg class="a" style="left:229px;top:323.5px;color:#c0c0c0" width="4" height="5"><use href="#lock"/></svg>
<div class="t n" style="left:239px;top:323px;color:#999">V3</div>
<svg class="a" style="left:254px;top:322px;color:#c8c8c8" width="7" height="6"><use href="#film"/></svg>
<svg class="a" style="left:267px;top:323px;color:#d0d0d0" width="7" height="5"><use href="#eye"/></svg>
<svg class="a" style="left:229px;top:339.5px;color:#3b87de" width="4" height="5"><use href="#lock"/></svg>
<div class="t n" style="left:239px;top:339px;color:#444">V2</div>
<svg class="a" style="left:254px;top:338px;color:#444" width="7" height="6"><use href="#film"/></svg>
<svg class="a" style="left:267px;top:339px;color:#444" width="7" height="5"><use href="#eye"/></svg>
<svg class="a" style="left:229px;top:355.5px;color:#c0c0c0" width="4" height="5"><use href="#lock"/></svg>
<div class="t n" style="left:239px;top:355px;color:#999">V2</div>
<svg class="a" style="left:254px;top:354px;color:#c8c8c8" width="7" height="6"><use href="#film"/></svg>
<svg class="a" style="left:267px;top:355px;color:#d0d0d0" width="7" height="5"><use href="#eye"/></svg>
<div class="a" style="left:210px;top:366px;width:15.5px;height:16px;background:#1d65a6"></div>
<div class="t n" style="left:213.5px;top:371px;color:#9dbbd8">V1</div>
<div class="a" style="left:235px;top:366px;width:15.5px;height:16px;background:#1d65a6"></div>
<div class="t n" style="left:238.5px;top:371px;color:#9dbbd8">V1</div>
<svg class="a" style="left:229px;top:371.5px;color:#c0c0c0" width="4" height="5"><use href="#lock"/></svg>
<svg class="a" style="left:254px;top:370px;color:#c8c8c8" width="7" height="6"><use href="#film"/></svg>
<svg class="a" style="left:267px;top:371px;color:#d0d0d0" width="7" height="5"><use href="#eye"/></svg>
<div class="a" style="left:210px;top:384px;width:15.5px;height:31px;background:#1d65a6"></div>
<div class="t n" style="left:213px;top:397px;color:#9dbbd8">A1</div>
<div class="a" style="left:235px;top:384px;width:15.5px;height:31px;background:#1d65a6"></div>
<div class="t n" style="left:238px;top:397px;color:#9dbbd8">A1</div>
<svg class="a" style="left:229px;top:397.5px;color:#c0c0c0" width="4" height="5"><use href="#lock"/></svg>
<svg class="a" style="left:254px;top:387px;color:#c8c8c8" width="7" height="6"><use href="#film"/></svg>
<div class="t n" style="left:268px;top:388px;color:#aaa;font-size:4.6px">M</div>
<div class="t n" style="left:282px;top:388px;color:#aaa;font-size:4.6px">S</div>
<svg class="a" style="left:293.5px;top:385.5px;color:#c8c8c8" width="5.5" height="9"><use href="#mic"/></svg>
<div class="t" style="left:252px;top:398px;color:#999">音频 <span class="n">1</span></div>
<div class="a" style="left:210px;top:417px;width:15.5px;height:26px;background:#1d65a6"></div>
<div class="t n" style="left:213px;top:428px;color:#9dbbd8">A2</div>
<div class="a" style="left:235px;top:417px;width:15.5px;height:26px;background:#1d65a6"></div>
<div class="t n" style="left:238px;top:428px;color:#9dbbd8">A2</div>
<svg class="a" style="left:229px;top:428.5px;color:#c0c0c0" width="4" height="5"><use href="#lock"/></svg>
<svg class="a" style="left:254px;top:419px;color:#c8c8c8" width="7" height="6"><use href="#film"/></svg>
<div class="t n" style="left:268px;top:420px;color:#aaa;font-size:4.6px">M</div>
<div class="t n" style="left:282px;top:420px;color:#aaa;font-size:4.6px">S</div>
<svg class="a" style="left:293.5px;top:417.5px;color:#c8c8c8" width="5.5" height="9"><use href="#mic"/></svg>
<div class="t" style="left:252px;top:430px;color:#999">音频 <span class="n">2</span></div>
<div class="a" style="left:208px;top:444px;width:314px;height:9px;background:#1c1c1c"></div>
<div class="a" style="left:212px;top:446px;width:143px;height:3px;background:#2e2e2e"></div>
<div class="a" style="left:209px;top:444.5px;width:6px;height:6px;border:1px solid #aaa;border-radius:50%;background:#222"></div>
<div class="a" style="left:352px;top:444.5px;width:6px;height:6px;border:1px solid #aaa;border-radius:50%;background:#222"></div>
<!-- ruler + tracks -->
<div class="t n" style="left:319.5px;top:308px;color:#b8b8b8">00;00</div>
<div class="t n" style="left:350px;top:308px;color:#b8b8b8">00;00;32;00</div>
<div class="t n" style="left:395px;top:308px;color:#b8b8b8">00;01;04;02</div>
<div class="t n" style="left:440px;top:308px;color:#b8b8b8">00;01;36;02</div>
<div class="t n" style="left:486px;top:308px;color:#b8b8b8">00;02;08;04</div>
<div class="a" style="left:319px;top:317px;width:195px;height:3px;background:repeating-linear-gradient(90deg,#4a4a4a 0 1px,transparent 1px 3.5px)"></div>
<div class="a" style="left:319px;top:334px;width:195px;height:17px;background:repeating-linear-gradient(-45deg,#303030 0 1px,#222 1px 3px)"></div>
<div class="hl" style="left:319px;top:333px;width:195px;background:#1c1c1c"></div>
<div class="hl" style="left:319px;top:351px;width:195px;background:#1c1c1c"></div>
<div class="hl" style="left:319px;top:366px;width:195px;background:#1c1c1c"></div>
<div class="a" style="left:319px;top:383px;width:195px;height:2px;background:#2c2c2c"></div>
<div class="hl" style="left:319px;top:416px;width:195px;background:#1c1c1c"></div>
<div class="a" style="left:318px;top:316px;width:1.5px;height:128px;background:#3a7ed6"></div>
<div class="a" style="left:316.5px;top:314px;width:4.5px;height:5px;background:#3b87de;border-radius:1px"></div>
<div class="a" style="left:317px;top:319.5px;width:3px;height:1.5px;background:#d8d840"></div>
<div class="a" style="left:318px;top:336px;width:2px;height:14px;background:#d090d0"></div>
<div class="a" style="left:514px;top:327px;width:4px;height:52px;background:#2c2c2c"></div>
<div class="a" style="left:512.5px;top:324px;width:6px;height:6px;border:1px solid #aaa;border-radius:50%;background:#222"></div>
<div class="a" style="left:512.5px;top:376px;width:6px;height:6px;border:1px solid #aaa;border-radius:50%;background:#222"></div>
<div class="a" style="left:512.5px;top:384px;width:6px;height:6px;border:1px solid #aaa;border-radius:50%;background:#222"></div>
<div class="a" style="left:514px;top:390px;width:4px;height:30px;background:#2c2c2c"></div>

<!-- ============ AUDIO METER ============ -->
<div class="p" style="left:526px;top:287px;width:42px;height:168.5px;background:#222"></div>
<div class="a" style="left:533px;top:299px;width:21px;height:155px;border:1px solid #3a3a3a;background:#1c1c1c"></div>
<div class="a" style="left:534px;top:300px;width:19px;height:3px;background:#2a2a2a"></div>
<div class="a" style="left:555px;top:300px;width:1px;height:154px;background:repeating-linear-gradient(180deg,#666 0 1px,transparent 1px 3.4px)"></div>
<div class="t" style="left:559px;top:301px;font-size:4.5px;color:#888">0</div>
<div class="t" style="left:558px;top:315px;font-size:4.5px;color:#888">-6</div>
<div class="t" style="left:557px;top:329px;font-size:4.5px;color:#888">-12</div>
<div class="t" style="left:557px;top:342px;font-size:4.5px;color:#888">-18</div>
<div class="t" style="left:557px;top:355px;font-size:4.5px;color:#888">-24</div>
<div class="t" style="left:557px;top:369px;font-size:4.5px;color:#888">-30</div>
<div class="t" style="left:557px;top:382px;font-size:4.5px;color:#888">-36</div>

<!-- ============ LOGO OVERLAY ============ -->
<div class="a" style="left:451px;top:395px;width:250px;height:72px;background:#fdfdfd;border-top-left-radius:22px"></div>
<svg class="a" style="left:451px;top:395px" width="250" height="72" viewBox="451 395 250 72">
  <rect x="484" y="400" width="47.5" height="63" rx="3" fill="#2b95e2"/>
  <path d="M533 401.5L538.2 404V459.5L533 462" fill="none" stroke="#2b95e2" stroke-width="1.6"/>
  <circle cx="507.4" cy="429.1" r="13.6" fill="none" stroke="#fdfdfd" stroke-width="4.6"/>
  <path d="M496.5 436.8L484 444" stroke="#fdfdfd" stroke-width="4.8"/>
  <g fill="none" stroke="#5a5a5a" stroke-width="3.4">
    <path d="M553.8 418.4V459.5"/>
    <path d="M559.8 420H583M571.7 420V459.5"/>
    <path d="M587 420H627M608.3 421V430M588.7 460V435A5 5 0 0 1 593.7 430H620.3A5 5 0 0 1 625.3 435V453.8A5 5 0 0 1 620.3 458.8H593.7A5 5 0 0 1 588.7 453.8M595 445H625"/>
    <path d="M629 423.5L648 418M629 429.2H647M639.4 418.5V460M632.5 433V455Q632.5 459 630 460M646.7 432V460.5"/>
    <path d="M652.5 421.5L659 427.5M652.5 431L658.5 436.8M651 448.7H668M662.9 418V460.5"/>
  </g>
  <text x="552.3" y="411.4" font-family="Liberation Sans" font-size="13.8" fill="#949494" stroke="#949494" stroke-width="0.55" textLength="56.5" lengthAdjust="spacingAndGlyphs">PConline</text>
</svg>
<div class="a" style="left:701px;top:395px;width:1px;height:73px;background:#151515"></div>
<div class="a" style="left:451px;top:467px;width:251px;height:1px;background:#151515"></div>

</body></html>
